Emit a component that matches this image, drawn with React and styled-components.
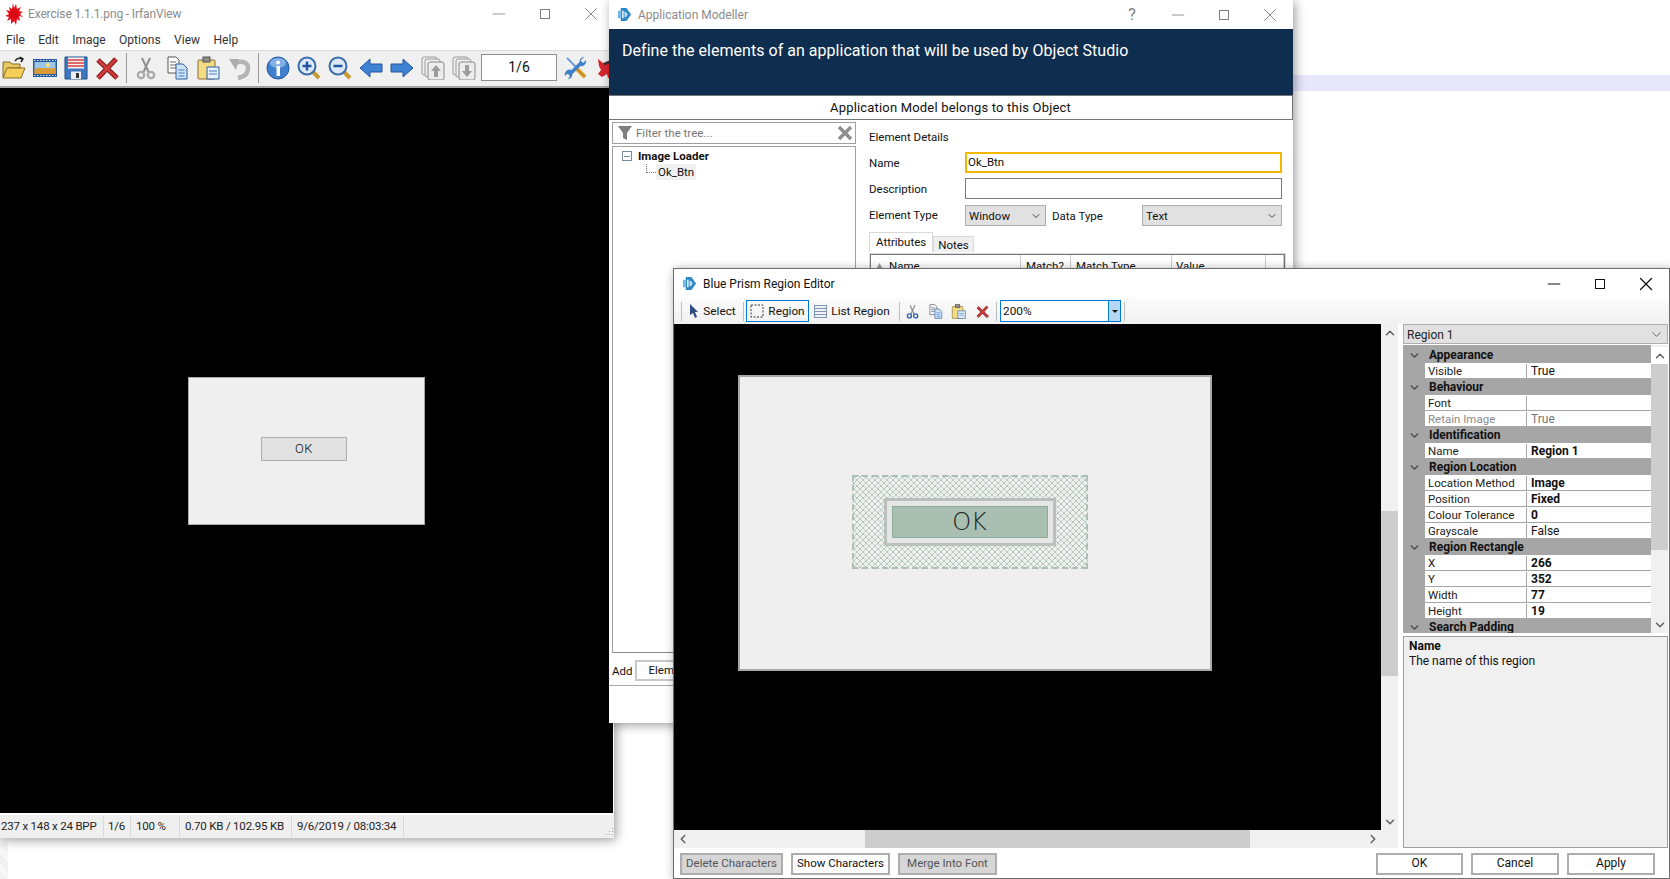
import React from 'react';
import styled, { createGlobalStyle } from 'styled-components';
import { ChevronDown, ChevronLeft, ChevronRight, ChevronUp, Minus, X } from 'lucide-react';

const GlobalStyle = createGlobalStyle`
  html, body { margin: 0; padding: 0; background: #fff; }
  * { box-sizing: border-box; }
  body { font-family: Roboto, "Open Sans", sans-serif; font-size: 12px; color: #111; }
`;

const Desktop = styled.div`
  position: relative;
  width: 1670px;
  height: 879px;
  overflow: hidden;
  background: linear-gradient(#fff 75px, #e7e7fb 75px, #e7e7fb 91px, #fff 91px);
`;

const DitherStrip = styled.div`
  position: absolute;
  left: 0;
  top: 838px;
  width: 8px;
  height: 41px;
  background: repeating-linear-gradient(45deg, #ececec 0 1px, #fff 1px 2px);
`;

const Win = styled.section`
  position: absolute;
  left: ${(p) => p.$left}px;
  top: ${(p) => p.$top}px;
  width: ${(p) => p.$width}px;
  height: ${(p) => p.$height}px;
  z-index: ${(p) => p.$z};
  display: flex;
  flex-direction: column;
  overflow: hidden;
  background: #fff;
  border: ${(p) => p.$border || 'none'};
  box-shadow: 2px 2px 10px rgba(0, 0, 0, 0.4);
`;

const TitleBar = styled.header`
  display: flex;
  align-items: center;
  flex: 0 0 ${(p) => p.$height}px;
  padding-left: ${(p) => p.$pad}px;
  gap: ${(p) => p.$gap ?? 6}px;
  background: #fff;
`;

const TitleText = styled.span`
  font-size: 12px;
  letter-spacing: ${(p) => p.$spacing || 0}px;
  color: ${(p) => (p.$active ? '#111' : '#8b8b8b')};
`;

const Controls = styled.div`
  display: flex;
  margin-left: auto;
  color: ${(p) => (p.$active ? '#111' : '#808080')};
`;

const ControlBtn = styled.span`
  display: flex;
  align-items: center;
  justify-content: center;
  width: 46px;
  height: 28px;
  font-size: 16px;
`;

const MaxBox = styled.i`
  display: block;
  width: 10px;
  height: 10px;
  border: 1px solid currentColor;
`;

/* ---------- icons ---------- */

const Ico = styled.svg`
  flex: none;
  display: block;
`;

const BluePrismLogo = () => (
  <Ico width="15" height="15" viewBox="0 0 16 16">
    <path d="M4 1h6l5 7-5 7H4z" fill="#2b87c8" />
    <path d="M1 4h3v8H1z" fill="#6fb4e4" />
    <path d="M5.500 4H7v8H5.500z" fill="#fff" />
    <path d="M8 5h1.500l2 3-2 3H8z" fill="#bfe0f5" />
  </Ico>
);

const SplatLogo = () => (
  <Ico width="18" height="22" viewBox="0 0 18 22">
    <path d="M8 0l1 5 2-4 1 5 4-2-2 4 4 1-3 2 3 3-4-1 1 5-3-2-1 6-2-4-3 3 0-5-4 2 2-4-4-1 4-2-3-4 4 1-1-4 3 2z" fill="#e8101a" />
    <circle cx="9" cy="11" r="4.500" fill="#d80a14" />
  </Ico>
);

const OpenIcon = () => (
  <Ico width="24" height="24" viewBox="0 0 24 24">
    <path d="M1 6h7l2 2h8v4H6L3 21H1z" fill="#e8c765" stroke="#8a6a28" />
    <path d="M5 12h18l-4 10H1z" fill="#f5cf58" stroke="#8a6a28" />
    <path d="M13 5c2-3 5-3 7-2M18 1l3 2-2 3" fill="none" stroke="#222" strokeWidth="1.500" />
  </Ico>
);

const FilmIcon = () => (
  <Ico width="24" height="24" viewBox="0 0 24 24">
    <rect x="0" y="3" width="24" height="18" fill="#2a5a9e" />
    <rect x="1.500" y="6" width="21" height="12" fill="#9cc6e8" />
    <path d="M1.500 13c5-2 8 0 21-1v6h-21z" fill="#dc9a34" />
    <circle cx="15" cy="9" r="2" fill="#f6e27a" />
    <path d="M1 4.500h22M1 19.500h22" stroke="#cfe0f0" strokeDasharray="1.500 1.500" />
  </Ico>
);

const SaveIcon = () => (
  <Ico width="24" height="24" viewBox="0 0 24 24">
    <path d="M1 1h22v22H1z" fill="#3f78c0" stroke="#1f4c8c" />
    <rect x="4" y="1.500" width="16" height="11" fill="#f4f4f4" />
    <path d="M4 4h16M4 7h16M4 10h16" stroke="#d83a3a" strokeWidth="1.600" />
    <rect x="7" y="15.500" width="10" height="7.500" fill="#eee" />
    <rect x="12" y="17" width="3" height="5" fill="#333" />
  </Ico>
);

const RedXIcon = ({ size = 24 }) => (
  <Ico width={size} height={size} viewBox="0 0 24 24">
    <path d="M3 4l19 18M21 3L3 22" stroke="#7a1c1c" strokeWidth="5" />
    <path d="M3 4l19 18M21 3L3 22" stroke="#d23a3a" strokeWidth="3" />
  </Ico>
);

const ScissorsIcon = ({ size = 24, color = '#a9a9a9' }) => (
  <Ico width={size} height={size} viewBox="0 0 24 24">
    <path d="M8 2l7 15M16 2L9 17" stroke="#8f8f8f" strokeWidth="2" fill="none" />
    <circle cx="7" cy="19" r="3.200" fill="none" stroke={color} strokeWidth="2.200" />
    <circle cx="17" cy="19" r="3.200" fill="none" stroke={color} strokeWidth="2.200" />
  </Ico>
);

const CopyIcon = ({ size = 24, back = '#fff' }) => (
  <Ico width={size} height={size} viewBox="0 0 24 24">
    <path d="M3 1h8l3 3v13H3z" fill={back} stroke="#555" />
    <path d="M5 6h6M5 9h6M5 12h6" stroke="#666" />
    <path d="M11 8h7l4 4v11H11z" fill="#cfe3f8" stroke="#2a5f9e" />
    <path d="M13.500 14h6M13.500 17h6M13.500 20h6" stroke="#3f7fc4" />
  </Ico>
);

const PasteIcon = ({ size = 24 }) => (
  <Ico width={size} height={size} viewBox="0 0 24 24">
    <rect x="2" y="4" width="17" height="19" rx="1" fill="#f5dc82" stroke="#8a6a3a" />
    <rect x="7" y="1" width="7" height="5" fill="#8c8c8c" stroke="#555" />
    <path d="M11 11h12v12H11z" fill="#e8f1fb" stroke="#2a5f9e" />
    <path d="M13 15h8M13 18h8" stroke="#3f7fc4" />
  </Ico>
);

const UndoIcon = () => (
  <Ico width="24" height="24" viewBox="0 0 24 24">
    <path d="M11 22c7-1 10-5 10-10s-5-8-12-5" fill="none" stroke="#b4b4b4" strokeWidth="4.500" />
    <path d="M2 3l10 0-3 11z" fill="#acacac" />
  </Ico>
);

const InfoIcon = () => (
  <Ico width="24" height="24" viewBox="0 0 24 24">
    <circle cx="12" cy="12" r="11" fill="#3f7fcc" stroke="#24579e" />
    <ellipse cx="12" cy="7" rx="8" ry="5" fill="#82b0e6" />
    <rect x="10.500" y="10" width="3.500" height="10" fill="#fff" />
    <circle cx="12" cy="6.500" r="2" fill="#fff" />
  </Ico>
);

const ZoomIcon = ({ plus }) => (
  <Ico width="24" height="24" viewBox="0 0 24 24">
    <path d="M15 15l7 7" stroke="#c79a36" strokeWidth="4" />
    <circle cx="10" cy="10" r="8.500" fill="#dbe9fa" stroke="#3a6cad" strokeWidth="2" />
    <path d="M5.500 10h9" stroke="#24579e" strokeWidth="2.500" />
    {plus && <path d="M10 5.500v9" stroke="#24579e" strokeWidth="2.500" />}
  </Ico>
);

const NavArrow = ({ right }) => (
  <Ico width="24" height="24" viewBox="0 0 24 24">
    <path d={right ? 'M23 12L13 3v5H1v8h12v5z' : 'M1 12L11 3v5h12v8H11v5z'} fill="#3f82d4" stroke="#24579e" />
  </Ico>
);

const PagesIcon = ({ down }) => (
  <Ico width="24" height="24" viewBox="0 0 24 24">
    <rect x="1" y="1" width="15" height="18" rx="2" fill="#eee" stroke="#9a9a9a" />
    <rect x="4" y="3" width="15" height="18" rx="2" fill="#eee" stroke="#9a9a9a" />
    <rect x="7" y="6" width="16" height="18" rx="2" fill="#ececec" stroke="#8a8a8a" />
    <path d={down ? 'M13 9h4v6h3l-5 6-5-6h3z' : 'M15 9l5 6h-3v6h-4v-6h-3z'} fill="#9c9c9c" />
  </Ico>
);

const ToolsIcon = () => (
  <Ico width="24" height="24" viewBox="0 0 24 24">
    <path d="M3 2l10 10" stroke="#6c9bd8" strokeWidth="2" />
    <path d="M12 12l9 9" stroke="#e0a832" strokeWidth="4.500" />
    <path d="M12 12l9 9" stroke="#7a5a18" strokeWidth="0.800" />
    <path d="M5 19L18 6" stroke="#3f7fcc" strokeWidth="3.500" />
    <path d="M16 7a5 5 0 0 1 3-6l1 0-3 3 0 2 2 1 3-3a5 5 0 0 1-6 6zM8 17a5 5 0 0 1-3 6l-1 0 2-3-1-2-2 0-2 2a5 5 0 0 1 7-6z" fill="#3f7fcc" />
  </Ico>
);

const BugIcon = () => (
  <Ico width="24" height="24" viewBox="0 0 24 24">
    <path d="M3 3l5 4h8l5-3-1 9-3 3v6h-4l-1-4-5 3-4-3 3-4-2-4z" fill="#d8262c" />
    <path d="M9 8l8-3" stroke="#333" strokeWidth="2.500" />
  </Ico>
);

const FunnelIcon = () => (
  <Ico width="16" height="16" viewBox="0 0 16 16">
    <path d="M1 1h14l-5 7v7l-4-2V8z" fill="#7e7e7e" />
  </Ico>
);

const ClearIcon = () => (
  <Ico width="16" height="16" viewBox="0 0 16 16">
    <path d="M2 2l12 12M14 2L2 14" stroke="#8f8f8f" strokeWidth="3.500" />
  </Ico>
);

const PointerIcon = () => (
  <Ico width="12" height="16" viewBox="0 0 12 16">
    <path d="M3 1v11l3-2 2 5 2-1-2-5h3z" fill="#2f4d80" />
  </Ico>
);

const DashedRectIcon = () => (
  <Ico width="14" height="14" viewBox="0 0 14 14">
    <rect x="1" y="1" width="12" height="12" fill="none" stroke="#333" strokeDasharray="2 1.500" />
  </Ico>
);

const ListIcon = () => (
  <Ico width="13" height="13" viewBox="0 0 13 13">
    <rect x="0.500" y="0.500" width="12" height="12" fill="#eef2f8" stroke="#7f93b2" />
    <path d="M1 3.500h11M1 6.500h11M1 9.500h11" stroke="#7f93b2" />
  </Ico>
);

const Grip = () => (
  <Ico width="10" height="10" viewBox="0 0 10 10">
    <path d="M8 1h1v1H8zM8 4h1v1H8zM8 7h1v1H8zM5 4h1v1H5zM5 7h1v1H5zM2 7h1v1H2z" fill="#a0a0a0" />
  </Ico>
);

const SortMark = () => (
  <Ico width="9" height="9" viewBox="0 0 9 9">
    <path d="M4.500 1L9 9H0z" fill="#9a9a9a" />
  </Ico>
);

/* ---------- IrfanView ---------- */

const MenuBar = styled.nav`
  display: flex;
  flex: 0 0 22px;
  align-items: center;
  gap: 13.500px;
  padding: 2px 0 0 6px;
  background: #fff;
  font-size: 12px;
  color: #333;
`;

const ToolBar = styled.div`
  display: flex;
  flex: 0 0 38px;
  align-items: center;
  gap: 7px;
  padding: 0 0 2px 2px;
  background: #f0f0f0;
  border-top: 1px solid #dcdcdc;
  border-bottom: 2px solid #a4a4a4;
`;

const ToolSep = styled.i`
  flex: none;
  width: 1px;
  height: 30px;
  background: #9c9c9c;
`;

const PageField = styled.div`
  flex: none;
  width: 76px;
  height: 27px;
  margin-left: -2px;
  border: 1px solid #8e8e8e;
  background: #fff;
  font-size: 14px;
  line-height: 24px;
  text-align: center;
`;

const BlackCanvas = styled.main`
  flex: 1;
  display: flex;
  align-items: center;
  justify-content: center;
  margin-right: 1px;
  background: #000;
  min-height: 0;
`;

const ShotImage = styled.div`
  flex: none;
  display: flex;
  align-items: center;
  justify-content: center;
  width: 237px;
  height: 148px;
  background: #efefef;
  border: 1px solid #a8a8a8;
`;

const ShotButton = styled.div`
  width: 86px;
  height: 24px;
  margin-right: 5px;
  margin-bottom: 3px;
  background: #e1e1e1;
  border: 1px solid #adadad;
  font-weight: 300;
  font-size: 13px;
  letter-spacing: 0.500px;
  line-height: 22px;
  text-align: center;
`;

const StatusBar = styled.footer`
  display: flex;
  flex: 0 0 23px;
  align-items: stretch;
  margin-top: 2px;
  padding: 1px 0;
  background: #efefef;
`;

const StatusCell = styled.span`
  flex: 0 0 ${(p) => p.$width}px;
  padding-left: ${(p) => p.$pad}px;
  line-height: 20px;
  font-size: 11.500px;
  letter-spacing: -0.200px;
  white-space: nowrap;
  color: #222;
  border-right: 1px solid #d8d8d8;
`;

const GripSlot = styled.span`
  margin-left: auto;
  align-self: flex-end;
`;

const IrfanWindow = () => (
  <Win $left={0} $top={0} $width={614} $height={838} $z={1}>
    <TitleBar $height={28} $pad={5} $gap={5}>
      <SplatLogo />
      <TitleText $spacing={-0.14}>Exercise 1.1.1.png - IrfanView</TitleText>
      <Controls>
        <ControlBtn><Minus size={20} strokeWidth={1} /></ControlBtn>
        <ControlBtn><MaxBox /></ControlBtn>
        <ControlBtn><X size={22} strokeWidth={1} /></ControlBtn>
      </Controls>
    </TitleBar>
    <MenuBar>
      {['File', 'Edit', 'Image', 'Options', 'View', 'Help'].map((m) => <span key={m}>{m}</span>)}
    </MenuBar>
    <ToolBar>
      <OpenIcon />
      <FilmIcon />
      <SaveIcon />
      <RedXIcon />
      <ToolSep />
      <ScissorsIcon />
      <CopyIcon />
      <PasteIcon />
      <UndoIcon />
      <ToolSep />
      <InfoIcon />
      <ZoomIcon plus />
      <ZoomIcon />
      <NavArrow />
      <NavArrow right />
      <PagesIcon />
      <PagesIcon down />
      <PageField>1/6</PageField>
      <ToolsIcon />
      <BugIcon />
    </ToolBar>
    <BlackCanvas>
      <ShotImage>
        <ShotButton>OK</ShotButton>
      </ShotImage>
    </BlackCanvas>
    <StatusBar>
      <StatusCell $width={104} $pad={1}>237 x 148 x 24 BPP</StatusCell>
      <StatusCell $width={27} $pad={4}>1/6</StatusCell>
      <StatusCell $width={49} $pad={5}>100 %</StatusCell>
      <StatusCell $width={112} $pad={5}>0.70 KB / 102.95 KB</StatusCell>
      <StatusCell $width={112} $pad={5}>9/6/2019 / 08:03:34</StatusCell>
      <GripSlot><Grip /></GripSlot>
    </StatusBar>
  </Win>
);

/* ---------- Application Modeller ---------- */

const DarkHeader = styled.div`
  flex: 0 0 66px;
  padding: 12px 13px;
  background: #0f2d4e;
  color: #fff;
  font-size: 16px;
  line-height: 20px;
  letter-spacing: 0.030px;
`;

const SubHeader = styled.div`
  flex: 0 0 25px;
  border-top: 1px solid #777;
  border-bottom: 1px solid #777;
  border-right: 1px solid #777;
  line-height: 23px;
  text-align: center;
  font-size: 13px;
  letter-spacing: 0.180px;
`;

const ModellerBody = styled.div`
  flex: 1;
  display: flex;
  min-height: 0;
`;

const TreeColumn = styled.div`
  flex: 0 0 244px;
  display: flex;
  flex-direction: column;
  margin: 2px 0 0 3px;
`;

const FilterBox = styled.div`
  flex: 0 0 22px;
  display: flex;
  align-items: center;
  gap: 3px;
  padding: 0 2px 0 4px;
  border: 1px solid #a0a0a0;
  color: #777;
  font-size: 11.500px;
`;

const ClearSlot = styled.span`
  margin-left: auto;
`;

const TreeBox = styled.div`
  flex: 0 0 507px;
  margin-top: 2px;
  padding-top: 1px;
  border: 1px solid #a0a0a0;
  border-bottom-color: #888;
`;

const TreeRow = styled.div`
  display: flex;
  align-items: center;
  height: 16px;
  padding-left: ${(p) => p.$indent}px;
  font-weight: ${(p) => (p.$bold ? 700 : 400)};
  font-size: 11.500px;
`;

const Expander = styled.span`
  flex: none;
  width: 10px;
  height: 10px;
  margin-right: 6px;
  border: 1px solid #7a8aa0;
  background: linear-gradient(#7a8aa0, #7a8aa0) center / 6px 1px no-repeat;
`;

const TreeConnector = styled.span`
  flex: none;
  width: 10px;
  height: 9px;
  margin-top: -8px;
  border-left: 1px dotted #777;
  border-bottom: 1px dotted #777;
`;

const TreeLabel = styled.span`
  padding: 0 2px;
  background: #f0f0f0;
  height: 16px;
  line-height: 16px;
`;

const AddRow = styled.div`
  display: flex;
  align-items: center;
  gap: 3px;
  margin-top: 7px;
  font-size: 11.500px;
`;

const ElemButton = styled.div`
  width: 60px;
  height: 21px;
  padding-left: 11px;
  border: 2px solid #c8c8c8;
  line-height: 17px;
`;

const BottomRule = styled.div`
  height: 3px;
  margin: 2px 0 0 -3px;
  width: 100%;
  border-bottom: 1px solid #a8a8a8;
`;

const DetailsColumn = styled.div`
  flex: 1;
  margin: 9px 11px 0 13px;
  font-size: 11.500px;
`;

const FormGrid = styled.div`
  display: grid;
  grid-template-columns: 96px 1fr;
  row-gap: 5px;
  margin-top: 6px;
  align-items: center;
`;

const DetailsTitle = styled.div`
  height: 17px;
  line-height: 17px;
`;

const TextInput = styled.div`
  height: 21px;
  padding-left: 1px;
  line-height: ${(p) => (p.$focus ? 17 : 19)}px;
  border: ${(p) => (p.$focus ? '2px solid #f5b800' : '1px solid #7a7a7a')};
`;

const SelectRow = styled.div`
  display: grid;
  grid-template-columns: 81px 96px 1fr;
  align-items: center;
  margin-top: 1px;
`;

const SelectBox = styled.div`
  display: flex;
  align-items: center;
  justify-content: space-between;
  height: 21px;
  padding: 0 3px;
  background: #e1e1e1;
  border: 1px solid #adadad;
`;

const MiniLabel = styled.span`
  padding-left: 6px;
`;

const Tabs = styled.div`
  display: flex;
  align-items: flex-end;
  height: 20px;
  margin-top: 6px;
`;

const Tab = styled.div`
  height: ${(p) => (p.$active ? 20 : 16)}px;
  padding: 0 ${(p) => (p.$active ? 6 : 4)}px;
  line-height: ${(p) => (p.$active ? 18 : 16)}px;
  background: ${(p) => (p.$active ? '#fff' : '#f0f0f0')};
  border: 1px solid #d9d9d9;
  border-bottom: none;
`;

const AttrTable = styled.div`
  display: grid;
  grid-template-columns: 150px 50px 101px 94px 1fr;
  margin: 2px -3px 0 1px;
  height: 30px;
  border: 1px solid #777;
  outline: 1px solid #ddd;
`;

const AttrHead = styled.span`
  display: flex;
  align-items: center;
  align-self: start;
  gap: 5px;
  height: 22px;
  padding-left: ${(p) => p.$pad || 5}px;
  border-right: 1px solid #ccc;
  font-size: 11.500px;
`;

const ModellerWindow = () => (
  <Win $left={609} $top={0} $width={684} $height={723} $z={2}>
    <TitleBar $height={29} $pad={8}>
      <BluePrismLogo />
      <TitleText>Application Modeller</TitleText>
      <Controls>
        <ControlBtn>?</ControlBtn>
        <ControlBtn><Minus size={20} strokeWidth={1} /></ControlBtn>
        <ControlBtn><MaxBox /></ControlBtn>
        <ControlBtn><X size={22} strokeWidth={1} /></ControlBtn>
      </Controls>
    </TitleBar>
    <DarkHeader>Define the elements of an application that will be used by Object Studio</DarkHeader>
    <SubHeader>Application Model belongs to this Object</SubHeader>
    <ModellerBody>
      <TreeColumn>
        <FilterBox>
          <FunnelIcon />
          Filter the tree...
          <ClearSlot><ClearIcon /></ClearSlot>
        </FilterBox>
        <TreeBox>
          <TreeRow $indent={9} $bold><Expander />Image Loader</TreeRow>
          <TreeRow $indent={33}><TreeConnector /><TreeLabel>Ok_Btn</TreeLabel></TreeRow>
        </TreeBox>
        <AddRow>Add<ElemButton>Element</ElemButton></AddRow>
        <BottomRule />
      </TreeColumn>
      <DetailsColumn>
        <DetailsTitle>Element Details</DetailsTitle>
        <FormGrid>
          <span>Name</span>
          <TextInput $focus>Ok_Btn</TextInput>
          <span>Description</span>
          <TextInput />
          <span>Element Type</span>
          <SelectRow>
            <SelectBox>Window<ChevronDown size={12} strokeWidth={1.5} /></SelectBox>
            <MiniLabel>Data Type</MiniLabel>
            <SelectBox>Text<ChevronDown size={12} strokeWidth={1.5} /></SelectBox>
          </SelectRow>
        </FormGrid>
        <Tabs>
          <Tab $active>Attributes</Tab>
          <Tab>Notes</Tab>
        </Tabs>
        <AttrTable>
          <AttrHead $pad={4}><SortMark />Name</AttrHead>
          <AttrHead>Match?</AttrHead>
          <AttrHead>Match Type</AttrHead>
          <AttrHead $pad={4}>Value</AttrHead>
          <AttrHead />
        </AttrTable>
      </DetailsColumn>
    </ModellerBody>
  </Win>
);

/* ---------- Region Editor ---------- */

const RegionBar = styled.div`
  display: flex;
  flex: 0 0 26px;
  align-items: center;
  padding-left: 7px;
  background: linear-gradient(#fbfbfb, #f1f1f1);
  font-size: 11.800px;
`;

const BarSep = styled.i`
  flex: none;
  width: 1px;
  height: 19px;
  margin: 0 ${(p) => p.$right ?? 3}px 0 ${(p) => p.$left ?? 3}px;
  background: #bdbdbd;
`;

const BarItem = styled.div`
  display: flex;
  flex: none;
  align-items: center;
  justify-content: center;
  gap: ${(p) => p.$gap ?? 4}px;
  width: ${(p) => p.$width}px;
  height: 22px;
  margin-left: ${(p) => p.$before || 0}px;
  border: 1px solid ${(p) => (p.$on ? '#0078d7' : 'transparent')};
`;

const ZoomCombo = styled.div`
  display: flex;
  flex: none;
  width: 121px;
  height: 22px;
  border: 1px solid #0078d7;
  background: #fff;
  line-height: 20px;
  padding-left: 2px;
`;

const ComboArrow = styled.span`
  margin-left: auto;
  width: 12px;
  background: #b5d7f3;
  border-left: 1px solid #0078d7;
  display: flex;
  align-items: center;
  justify-content: center;
  &::after {
    content: '';
    border: 3px solid transparent;
    border-top: 3px solid #111;
    margin-top: 3px;
  }
`;

const RegionMain = styled.div`
  flex: 1;
  display: flex;
  min-height: 0;
`;

const EditorPane = styled.div`
  flex: 0 0 724px;
  display: grid;
  grid-template-columns: 1fr 17px;
  grid-template-rows: 1fr 18px;
  min-height: 0;
  background: #f0f0f0;
`;

const EditorCanvas = styled.div`
  padding: 51px 0 0 64px;
  background: #000;
  overflow: hidden;
`;

const ZoomedImage = styled.div`
  display: flex;
  align-items: center;
  justify-content: center;
  width: 474px;
  height: 296px;
  background: #efefef;
  border: 2px solid #a8a8a8;
`;

const HatchedRegion = styled.div`
  display: flex;
  align-items: center;
  justify-content: center;
  width: 236px;
  height: 94px;
  margin: 0 11px 3px 0;
  border: 2px dashed #a9c0b2;
  background-color: #f0f0f0;
  background-image:
    linear-gradient(45deg, transparent 42%, #b6cabe 42% 58%, transparent 58%),
    linear-gradient(-45deg, transparent 42%, #b6cabe 42% 58%, transparent 58%);
  background-size: 6px 6px;
`;

const ZoomedBtnFrame = styled.div`
  width: 172px;
  height: 48px;
  padding: 5px;
  background: #e6e6e6;
  border: 3px solid #bbbfbd;
`;

const ZoomedBtnFace = styled.div`
  height: 100%;
  background: #a9bfb1;
  border: 1px solid #8aab98;
  font-family: "DejaVu Sans", sans-serif;
  font-weight: 200;
  font-size: 24px;
  line-height: 30px;
  text-align: center;
  color: #17211b;
`;

const VScroll = styled.div`
  display: flex;
  flex-direction: column;
  align-items: stretch;
  color: #606060;
`;

const ScrollEnd = styled.span`
  display: flex;
  flex: 0 0 17px;
  align-items: center;
  justify-content: center;
  margin-top: ${(p) => p.$before || 0}px;
  background: ${(p) => p.$bg || 'transparent'};
`;

const VThumb = styled.div`
  flex: 0 0 ${(p) => p.$height}px;
  margin-top: ${(p) => p.$offset}px;
  background: #cdcdcd;
`;

const ScrollGap = styled.div`
  flex: 1;
`;

const HScroll = styled.div`
  display: flex;
  color: #606060;
`;

const HThumb = styled.div`
  flex: 0 0 385px;
  margin-left: 174px;
  background: #cdcdcd;
`;

const PropPanel = styled.div`
  flex: 0 0 265px;
  display: flex;
  flex-direction: column;
  margin-left: 5px;
  min-height: 0;
`;

const PropCombo = styled.div`
  display: flex;
  flex: 0 0 20px;
  align-items: center;
  justify-content: space-between;
  padding: 1px 3px 0;
  background: #e1e1e1;
  border: 1px solid #adadad;
  color: #222;
`;

const PropArea = styled.div`
  display: flex;
  flex: 0 0 288px;
  margin-top: 1px;
  overflow: hidden;
  background: #f0f0f0;
`;

const PropList = styled.div`
  flex: 1;
  padding-top: 2px;
  background: #a6a6a6;
`;

const CategoryRow = styled.div`
  display: flex;
  align-items: center;
  height: 16px;
  padding-left: 5px;
  gap: 8px;
  background: #a6a6a6;
  font-weight: 700;
  font-size: 12px;
  color: #111;
`;

const PropRow = styled.div`
  display: grid;
  grid-template-columns: 102px 1fr;
  height: 16px;
  margin-left: 22px;
  padding-top: 1px;
  line-height: 14px;
  background: #fff;
  border-bottom: 1px solid #a6a6a6;
`;

const PropName = styled.span`
  padding-left: 3px;
  border-right: 1px solid #a6a6a6;
  font-size: 11.500px;
  color: ${(p) => (p.$muted ? '#8a8a8a' : '#222')};
`;

const PropValue = styled.span`
  padding-left: 4px;
  font-weight: ${(p) => (p.$strong ? 700 : 400)};
  color: ${(p) => (p.$muted ? '#777' : '#111')};
`;

const PropScroll = styled(VScroll)`
  flex: 0 0 17px;
`;

const HelpBox = styled.div`
  flex: 1;
  margin-top: 3px;
  padding: 2px 5px;
  background: #f0f0f0;
  border: 1px solid #a0a0a0;
  line-height: 15px;
`;

const HelpTitle = styled.div`
  font-weight: 700;
`;

const FooterBar = styled.div`
  display: flex;
  flex: 0 0 30px;
  gap: 8px;
  padding: 5px 13px 3px 6px;
  background: #fff;
`;

const FootButton = styled.div`
  flex: none;
  width: ${(p) => p.$width}px;
  height: 22px;
  margin-left: ${(p) => p.$before || 0}px;
  background: ${(p) => (p.$disabled ? '#d6d6d6' : '#fff')};
  border: 2px solid #adadad;
  color: ${(p) => (p.$disabled ? '#555' : '#111')};
  line-height: 17px;
  text-align: center;
  font-size: ${(p) => p.$size || 11.5}px;
`;

const sections = [
  ['Appearance', [['Visible', 'True']]],
  ['Behaviour', [['Font', ''], ['Retain Image', 'True', 'muted']]],
  ['Identification', [['Name', 'Region 1', 'strong']]],
  ['Region Location', [
    ['Location Method', 'Image', 'strong'],
    ['Position', 'Fixed', 'strong'],
    ['Colour Tolerance', '0', 'strong'],
    ['Grayscale', 'False'],
  ]],
  ['Region Rectangle', [
    ['X', '266', 'strong'],
    ['Y', '352', 'strong'],
    ['Width', '77', 'strong'],
    ['Height', '19', 'strong'],
  ]],
  ['Search Padding', []],
];

const RegionWindow = () => (
  <Win $left={673} $top={268} $width={997} $height={611} $z={3} $border="1px solid #6e6e6e">
    <TitleBar $height={29} $pad={8}>
      <BluePrismLogo />
      <TitleText $active>Blue Prism Region Editor</TitleText>
      <Controls $active>
        <ControlBtn><Minus size={20} strokeWidth={1.3} /></ControlBtn>
        <ControlBtn><MaxBox /></ControlBtn>
        <ControlBtn><X size={22} strokeWidth={1.3} /></ControlBtn>
      </Controls>
    </TitleBar>
    <RegionBar>
      <BarSep $left={0} $right={2} />
      <BarItem $width={55} $gap={4}><PointerIcon />Select</BarItem>
      <BarSep $left={4} $right={2} />
      <BarItem $width={63} $on><DashedRectIcon />Region</BarItem>
      <BarItem $width={86} $gap={4}><ListIcon />List Region</BarItem>
      <BarSep $left={4} $right={5} />
      <BarItem $width={14}><ScissorsIcon size={15} color="#2f5fa8" /></BarItem>
      <BarItem $width={16} $before={8}><CopyIcon size={15} back="#eef4fb" /></BarItem>
      <BarItem $width={16} $before={7}><PasteIcon size={15} /></BarItem>
      <BarItem $width={14} $before={9}><RedXIcon size={13} /></BarItem>
      <BarSep $left={7} $right={3} />
      <ZoomCombo>200%<ComboArrow /></ZoomCombo>
      <BarSep $left={3} $right={0} />
    </RegionBar>
    <RegionMain>
      <EditorPane>
        <EditorCanvas>
          <ZoomedImage>
            <HatchedRegion>
              <ZoomedBtnFrame>
                <ZoomedBtnFace>OK</ZoomedBtnFace>
              </ZoomedBtnFrame>
            </HatchedRegion>
          </ZoomedImage>
        </EditorCanvas>
        <VScroll>
          <ScrollEnd><ChevronUp size={14} strokeWidth={2.5} /></ScrollEnd>
          <VThumb $offset={170} $height={165} />
          <ScrollGap />
          <ScrollEnd><ChevronDown size={14} strokeWidth={2.5} /></ScrollEnd>
        </VScroll>
        <HScroll>
          <ScrollEnd><ChevronLeft size={14} strokeWidth={2.5} /></ScrollEnd>
          <HThumb />
          <ScrollGap />
          <ScrollEnd><ChevronRight size={14} strokeWidth={2.5} /></ScrollEnd>
        </HScroll>
        <span />
      </EditorPane>
      <PropPanel>
        <PropCombo>Region 1<ChevronDown size={15} strokeWidth={1} /></PropCombo>
        <PropArea>
          <PropList>
            {sections.map(([title, rows]) => (
              <React.Fragment key={title}>
                <CategoryRow><ChevronDown size={13} strokeWidth={2.5} color="#444" />{title}</CategoryRow>
                {rows.map(([name, value, kind]) => (
                  <PropRow key={name}>
                    <PropName $muted={kind === 'muted'}>{name}</PropName>
                    <PropValue $strong={kind === 'strong'} $muted={kind === 'muted'}>{value}</PropValue>
                  </PropRow>
                ))}
              </React.Fragment>
            ))}
          </PropList>
          <PropScroll>
            <ScrollEnd $bg="#fff" $before={2}><ChevronUp size={14} strokeWidth={2.5} /></ScrollEnd>
            <VThumb $offset={0} $height={186} />
            <ScrollGap />
            <ScrollEnd><ChevronDown size={14} strokeWidth={2.5} /></ScrollEnd>
          </PropScroll>
        </PropArea>
        <HelpBox>
          <HelpTitle>Name</HelpTitle>
          The name of this region
        </HelpBox>
      </PropPanel>
    </RegionMain>
    <FooterBar>
      <FootButton $width={103} $disabled>Delete Characters</FootButton>
      <FootButton $width={99}>Show Characters</FootButton>
      <FootButton $width={99} $disabled>Merge Into Font</FootButton>
      <FootButton $width={87} $before={371} $size={12}>OK</FootButton>
      <FootButton $width={88} $size={12}>Cancel</FootButton>
      <FootButton $width={88} $size={12}>Apply</FootButton>
    </FooterBar>
  </Win>
);

export default function App() {
  return (
    <>
      <GlobalStyle />
      <Desktop>
        <DitherStrip />
        <IrfanWindow />
        <ModellerWindow />
        <RegionWindow />
      </Desktop>
    </>
  );
}
